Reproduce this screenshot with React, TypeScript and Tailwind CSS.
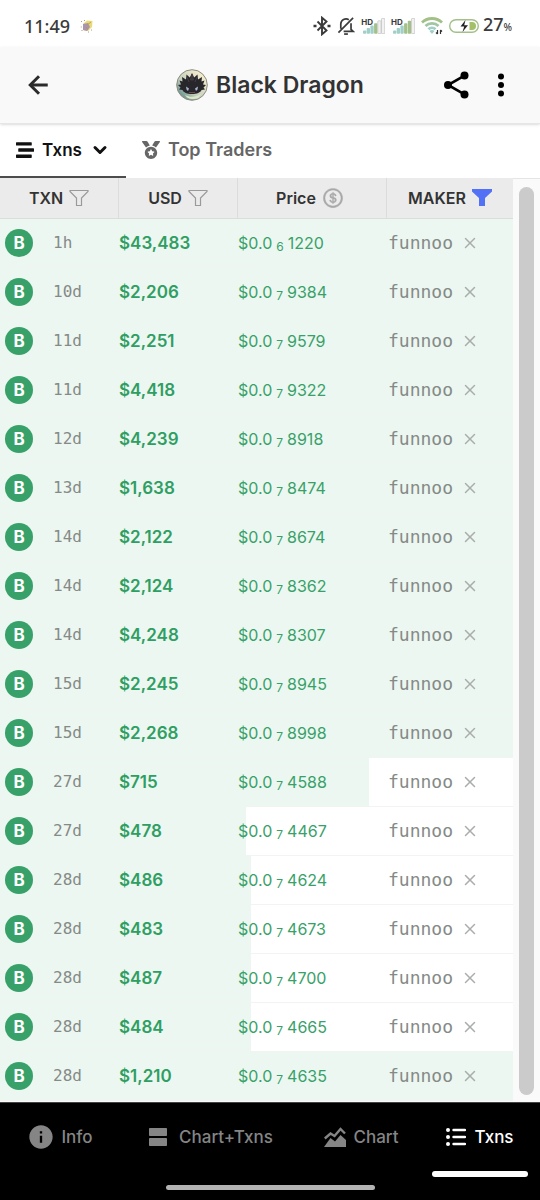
import { ArrowLeft, ChevronDown, X } from 'lucide-react'
import { AiOutlineDollarCircle } from 'react-icons/ai'
import { FaMedal, FaStream } from 'react-icons/fa'
import { MdInfo } from 'react-icons/md'

type Txn = {
  age: string
  usd: string
  zeros: number
  digits: string
  fill: number
}

const txns: Txn[] = [
  { age: '1h', usd: '$43,483', zeros: 6, digits: '1220', fill: 100 },
  { age: '10d', usd: '$2,206', zeros: 7, digits: '9384', fill: 100 },
  { age: '11d', usd: '$2,251', zeros: 7, digits: '9579', fill: 100 },
  { age: '11d', usd: '$4,418', zeros: 7, digits: '9322', fill: 100 },
  { age: '12d', usd: '$4,239', zeros: 7, digits: '8918', fill: 100 },
  { age: '13d', usd: '$1,638', zeros: 7, digits: '8474', fill: 100 },
  { age: '14d', usd: '$2,122', zeros: 7, digits: '8674', fill: 100 },
  { age: '14d', usd: '$2,124', zeros: 7, digits: '8362', fill: 100 },
  { age: '14d', usd: '$4,248', zeros: 7, digits: '8307', fill: 100 },
  { age: '15d', usd: '$2,245', zeros: 7, digits: '8945', fill: 100 },
  { age: '15d', usd: '$2,268', zeros: 7, digits: '8998', fill: 100 },
  { age: '27d', usd: '$715', zeros: 7, digits: '4588', fill: 72 },
  { age: '27d', usd: '$478', zeros: 7, digits: '4467', fill: 48 },
  { age: '28d', usd: '$486', zeros: 7, digits: '4624', fill: 49 },
  { age: '28d', usd: '$483', zeros: 7, digits: '4673', fill: 49 },
  { age: '28d', usd: '$487', zeros: 7, digits: '4700', fill: 49 },
  { age: '28d', usd: '$484', zeros: 7, digits: '4665', fill: 49 },
  { age: '28d', usd: '$1,210', zeros: 7, digits: '4635', fill: 100 },
]

function Signal({ level }: { level: number }) {
  return (
    <span className="flex items-start">
      <span className="text-[8px] leading-2 font-bold">HD</span>
      <svg className="-ml-2.5 h-4 w-[22px]" viewBox="0 0 22 16">
        {[0, 1, 2, 3, 4, 5].map((i) => (
          <rect
            key={i}
            x={i * 3.7}
            y={12.4 - i * 2.4}
            width="3.3"
            height={3.3 + i * 2.4}
            rx="0.8"
            fill={i < level ? (i < 3 ? '#9fcfc6' : '#a3c088') : '#f1f1f1'}
            stroke={i < level ? 'none' : '#b5b5b5'}
            strokeWidth="0.6"
          />
        ))}
      </svg>
    </span>
  )
}

function StatusBar() {
  return (
    <div className="flex h-[47px] items-center justify-between bg-white pt-1 pr-7 pl-6 text-[#3b3b3b]">
      <div className="flex items-center gap-2.5">
        <span className="font-['Noto_Sans',sans-serif] text-[18px] leading-6 font-medium">11:49</span>
        <svg className="size-3.5" viewBox="0 0 14 14">
          <path d="M3 5 7 1.5l5.5.5-.5 6-4 4-5-1z" fill="#e6dc74" />
          <path d="m3 5 5-1 2 4-3 4-4-1z" fill="#a995ad" />
          <path d="M1 2.5h1M4 1.5h1M.8 8h1M1.5 11.5h1M11 11h1M8 13h1" stroke="#b79a83" />
          <path d="m7 6 4-3M6 8l2 3" stroke="#c98b58" strokeWidth="0.8" />
        </svg>
      </div>
      <div className="flex items-center gap-1.5">
        <svg className="h-5 w-[18px]" viewBox="0 0 18 20" fill="none" stroke="currentColor" strokeWidth="1.9">
          <path d="m4.5 5.5 9 9L9 18.3V1.7l4.5 3.8-9 9" />
          <path d="M.5 10h3M14.5 10h3" strokeWidth="2.6" />
        </svg>
        <svg className="h-5 w-[18px]" viewBox="0 0 19 20" fill="none" stroke="currentColor" strokeWidth="1.8">
          <path d="M4 13V8a5.5 5.5 0 0 1 8.5-4.6M14.8 7v6.500l2.2 2.200H7M1.500 17 17 1.500" />
          <path d="M7.500 18.500h4" />
        </svg>
        <Signal level={4} />
        <Signal level={5} />
        <svg className="h-[18px] w-[22px]" viewBox="0 0 22 18" fill="none" strokeWidth="2.8">
          <path d="M1 5.500a14.500 14.500 0 0 1 20 0" stroke="#a3c088" />
          <path d="M4.500 9a9.500 9.500 0 0 1 13 0" stroke="#a0c6a2" />
          <path d="M7.500 12.300a5 5 0 0 1 7 0" stroke="#9fcfc6" />
          <path d="m8.500 14 2.500 3 2.500-3a4 4 0 0 0-5 0z" fill="#9fcfc6" />
          <path d="M16.500 13v4M19.500 13v4M15 15.500l1.500 1.500M21 14.500 19.500 13" stroke="#333" strokeWidth="1.2" />
        </svg>
        <div className="flex items-center gap-1">
          <svg className="h-[14px] w-[30px]" viewBox="0 0 30 14">
            <rect x="0.7" y="0.7" width="28.6" height="12.6" rx="6.3" fill="#fff" stroke="#a3c088" strokeWidth="1.4" />
            <path d="M20.500 3H23a4 4 0 0 1 0 8h-2.500z" fill="#a3c068" />
            <path d="m16.500 1-5 6.500h3.700L13.500 13l5.500-6.800h-3.800z" fill="#222" />
          </svg>
          <span className="font-['Noto_Sans',sans-serif] text-[18px] leading-6 font-medium">
            27<span className="text-[10px]">%</span>
          </span>
        </div>
      </div>
    </div>
  )
}

function DragonAvatar() {
  return (
    <svg className="size-8" viewBox="0 0 32 32">
      <defs>
        <linearGradient id="sky" x1="1" y1="0" x2="0" y2="1">
          <stop offset="0.2" stopColor="#f1e9cb" />
          <stop offset="0.6" stopColor="#c3cfbd" />
          <stop offset="1" stopColor="#3c7476" />
        </linearGradient>
      </defs>
      <circle cx="16" cy="16" r="15.3" fill="url(#sky)" stroke="#8b8b80" strokeWidth="1" />
      <path d="M9 26c5 2.500 10 2.500 16-1l-2 3.500c-4 2-8 2-12 0z" fill="#dbe8c9" />
      <path
        d="m16 4 2.200 4.500 3.300-3 .5 5L26 8l-.5 4.500 3-1-1.500 4 3 .5-2.500 2.500 1.500 2-3.500.5c-1 2.500-4.500 4-9.500 4s-8.500-1.500-9.500-4L3 20.500l1.500-2L2 16l3-.5-1.500-4 3 1L6 8l4 2.500.5-5 3.300 3z"
        fill="#26262b"
      />
      <path d="m16 5 1.500 6h-3zM11 8l2 5M21 8l-2 5" stroke="#4a4248" strokeWidth="0.8" fill="#393337" />
      <path d="m10 17.500 3 2-1 2.500-1.500-1.500zM22 17.500l-3 2 1 2.500 1.500-1.500z" fill="#aab2d4" />
      <path d="M13 23.500h6" stroke="#6b4a44" />
    </svg>
  )
}

function Header() {
  return (
    <header className="relative grid h-[77px] grid-cols-[1fr_auto_1fr] items-center border-b border-[#e6e6e6] bg-[#f9f9f9] px-6 shadow-sm">
      <button aria-label="Back" className="justify-self-start text-[#2b2b2b]">
        <ArrowLeft className="size-[30px]" strokeWidth={2.4} strokeLinecap="butt" strokeLinejoin="miter" />
      </button>
      <h1 className="flex items-center gap-2 text-[23px] leading-7 font-semibold text-[#333]">
        <DragonAvatar />
        Black Dragon
      </h1>
      <div className="flex items-center gap-4 justify-self-end text-black">
        <button aria-label="Share">
          <svg className="size-7" viewBox="0 0 28 28" fill="currentColor">
            <path d="M22.500 4.600 6 14l16.500 9.400" fill="none" stroke="currentColor" strokeWidth="2.600" />
            <circle cx="22.500" cy="4.600" r="4" />
            <circle cx="6" cy="14" r="4" />
            <circle cx="22.500" cy="23.400" r="4" />
          </svg>
        </button>
        <button aria-label="More" className="px-3">
          <svg className="h-6 w-1.5" viewBox="0 0 6 24" fill="currentColor">
            <circle cx="3" cy="3.500" r="3" />
            <circle cx="3" cy="12" r="3" />
            <circle cx="3" cy="20.500" r="3" />
          </svg>
        </button>
      </div>
    </header>
  )
}

function Tabs() {
  return (
    <div className="flex h-[54px] bg-white text-[17px] leading-6 font-semibold">
      <button className="flex items-center gap-2 border-b-2 border-[#4d4d4d] px-4 text-[#111]">
        <FaStream className="size-[18px]" />
        Txns
        <ChevronDown className="size-5" strokeWidth={3.6} />
      </button>
      <button className="flex items-center gap-2 border-b-2 border-transparent px-4 text-[18px] text-[#666]">
        <FaMedal className="size-[18px]" />
        Top Traders
      </button>
    </div>
  )
}

function Funnel({ active = false }: { active?: boolean }) {
  return (
    <svg className="h-[18px] w-5" viewBox="0 0 20 18">
      <path
        d={active ? 'M0 0h20v2.500l-7 6.500v8H7V9L0 2.500z' : 'M1 1.500h18v1L12.500 9v7.500h-5V9L1 2.500z'}
        fill={active ? '#5271f5' : 'none'}
        stroke={active ? 'none' : '#9a9a9a'}
        strokeWidth="1.200"
      />
    </svg>
  )
}

function TxnTable() {
  return (
    <table className="w-full table-fixed border-separate border-spacing-0 text-left">
      <colgroup>
        <col className="w-[119px]" />
        <col className="w-[119px]" />
        <col className="w-[149px]" />
        <col />
      </colgroup>
      <thead>
        <tr className="h-[41px] bg-[#ebebeb] text-[16px] leading-6 text-[#333]">
          <th className="border-r border-b border-[#dcdcdc] p-0 font-semibold">
            <button className="flex w-full items-center justify-center gap-1.5">
              TXN <Funnel />
            </button>
          </th>
          <th className="border-r border-b border-[#dcdcdc] p-0 font-semibold">
            <button className="flex w-full items-center justify-center gap-1.5">
              USD <Funnel />
            </button>
          </th>
          <th className="border-r border-b border-[#dcdcdc] p-0 font-semibold">
            <button className="flex w-full items-center justify-center gap-1.5 pr-1">
              Price <AiOutlineDollarCircle className="size-[22px] text-[#a8a8a8]" strokeWidth="20" />
            </button>
          </th>
          <th className="border-b border-[#dcdcdc] p-0 font-semibold">
            <button className="flex w-full items-center justify-center gap-1.5">
              MAKER <Funnel active />
            </button>
          </th>
        </tr>
      </thead>
      <tbody>
        {txns.map((txn, i) => (
          <tr
            key={i}
            className="h-[49px] bg-white bg-linear-to-r from-[#ecf7f1] to-[#ecf7f1] bg-no-repeat"
            style={{ backgroundSize: `${txn.fill}% 100%` }}
          >
            <td className="border-b border-[#f0f5f2] p-0">
              <div className="flex items-center gap-5 pl-[5px]">
                <span className="flex size-7 items-center justify-center rounded-full bg-[#38a169] text-[17px] leading-6 font-bold text-white">
                  B
                </span>
                <span className="font-['DejaVu_Sans_Mono',monospace] text-[16px] leading-6 text-[#858a87]">
                  {txn.age}
                </span>
              </div>
            </td>
            <td className="border-b border-[#f0f5f2] p-0 text-[17px] leading-6 font-semibold text-[#2f9e63]">
              {txn.usd}
            </td>
            <td className="border-b border-[#f0f5f2] p-0 text-[16px] leading-6 text-[#38a169]">
              <span className="flex items-center gap-1">
                $0.0
                <sub className="top-1 bottom-auto text-[12px] leading-4">{txn.zeros}</sub>
                {txn.digits}
              </span>
            </td>
            <td className="border-b border-[#f0f5f2] p-0">
              <div className="flex items-center gap-2 pl-px">
                <a href="#maker" className="font-['DejaVu_Sans_Mono',monospace] text-[18px] leading-6 text-[#858a87]">
                  funnoo
                </a>
                <button aria-label="Clear maker filter" className="text-[#a9adab]">
                  <X className="size-[18px]" strokeWidth={2} />
                </button>
              </div>
            </td>
          </tr>
        ))}
      </tbody>
    </table>
  )
}

function BottomNav() {
  return (
    <nav className="border-t border-[#444] bg-black pb-2.5 text-[17px] leading-6 font-medium text-[#858585]">
      <div className="grid h-[68px] grid-cols-[60fr_91fr_59fr_60fr]">
        <button className="flex items-center justify-center gap-1.5">
          <MdInfo className="size-7" />
          Info
        </button>
        <button className="flex items-center justify-center gap-3">
          <svg className="size-[18px]" viewBox="0 0 18 18" fill="currentColor">
            <rect width="18" height="8" rx="0.8" />
            <rect y="10" width="18" height="8" rx="0.8" />
          </svg>
          Chart+Txns
        </button>
        <button className="flex items-center justify-center gap-2">
          <svg className="h-5 w-[22px]" viewBox="0 0 22 20">
            <path d="m.8 11.500 5.700-5 4 2.500L16.500 2 21 6.500" fill="none" stroke="currentColor" strokeWidth="2.400" />
            <path d="m0 20 6.500-9 4.500 3.500L16.500 8l5.500 5v7z" fill="currentColor" />
          </svg>
          Chart
        </button>
        <button className="flex items-center justify-center gap-2 text-white">
          <svg className="h-[18px] w-5" viewBox="0 0 20 18" fill="none" stroke="currentColor">
            <path d="M2 2h.01M2 9h.01M2 16h.01" strokeWidth="4" strokeLinecap="round" />
            <path d="M7.500 2H19M7.500 9H19M7.500 16H19" strokeWidth="2.400" strokeLinecap="round" />
          </svg>
          Txns
        </button>
      </div>
      <div className="flex justify-end px-3">
        <span className="h-1.5 w-24 rounded-full bg-white" />
      </div>
      <div className="flex justify-center pt-2">
        <span className="h-[5px] w-[209px] rounded-full bg-[#b3b3b3]" />
      </div>
    </nav>
  )
}

export default function App() {
  return (
    <div className="min-h-screen bg-white font-['Inter',sans-serif]">
      <StatusBar />
      <Header />
      <Tabs />
      <main className="flex bg-[#fafafa] pb-px">
        <div className="min-w-0 flex-1">
          <TxnTable />
        </div>
        <div className="flex w-[27px] justify-center border-t border-[#e5e5e5] pt-2 pb-1.5">
          <span className="w-[15px] rounded-full bg-[#cbcbcb]" />
        </div>
      </main>
      <BottomNav />
    </div>
  )
}
